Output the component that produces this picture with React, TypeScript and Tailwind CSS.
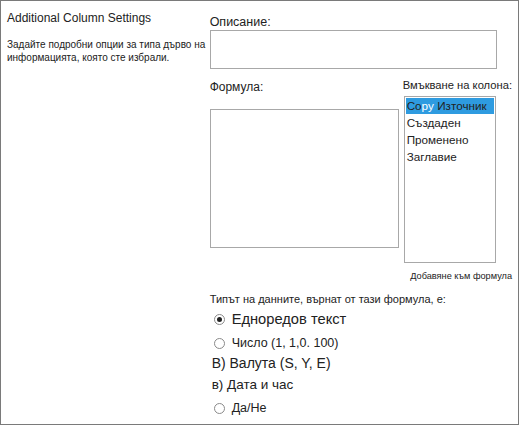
import React from "react";

const font = { fontFamily: '"Liberation Sans", Arial, sans-serif' };

function Radio({ checked }: { checked?: boolean }) {
    return (
        <span className="w-[11px] h-[11px] rounded-full border border-[#8a8a8a] bg-white flex items-center justify-center shrink-0">
            {checked && <span className="w-[5px] h-[5px] rounded-full bg-[#222]" />}
        </span>
    )
}

const columns = ["Създаден", "Променено", "Заглавие"];

export default function App() {
    return (
        <div style={font} className="w-[520px] h-[426px] bg-white">
            <div className="w-[519px] h-[425px] border border-[#7a7a7a] flex text-[#222]">
                <div className="w-[209px] pl-[6px] pt-[9px]">
                    <div className="text-[12px] leading-[16px]">Additional Column Settings</div>
                    <div className="mt-[12px] text-[10px] leading-[13px]">
                        Задайте подробни опции за типа дърво на информацията, която сте избрали.
                    </div>
                </div>

                <div className="flex-1 pr-[6px] pt-[13px]">
                    <div className="text-[12.5px] leading-[16px]">Описание:</div>
                    <div className="w-[287px] h-[39px] border border-[#a8a8a8]" />

                    <div className="flex">
                        <div className="w-[193px]">
                            <div className="mt-[10px] text-[12px] leading-[16px]">Формула:</div>
                            <div className="mt-[14px] w-[189px] h-[139px] border border-[#a8a8a8]" />
                        </div>
                        <div className="flex-1 flex flex-col">
                            <div className="mt-[8px] text-[11.2px] leading-[16px] whitespace-nowrap">Вмъкване на колона:</div>
                            <div className="mt-[3px] ml-[1px] w-[92px] h-[167px] border border-[#a8a8a8] p-px">
                                <div className="bg-[#2e9be0] h-[16px] px-[1px] text-[11.7px] leading-[16px] whitespace-nowrap">
                                    Co<span className="text-white">py</span> Източник
                                </div>
                                {columns.map((c) => (
                                    <div key={c} className="h-[17px] px-[1px] text-[11.7px] leading-[17px]">{c}</div>
                                ))}
                            </div>
                            <div className="mt-[6px] text-[9.2px] leading-[14px] text-right whitespace-nowrap">Добавяне към формула</div>
                        </div>
                    </div>

                    <div className="mt-[8px] text-[11px] leading-[16px]">Типът на данните, върнат от тази формула, е:</div>
                    <div className="mt-[2px] ml-[4px] flex items-center gap-[7px] text-[14.7px] leading-[20px]">
                        <Radio checked />
                        <span>Едноредов текст</span>
                    </div>
                    <div className="mt-[6px] ml-[4px] flex items-center gap-[7px] text-[12.5px] leading-[16px]">
                        <Radio />
                        <span>Число (1, 1,0. 100)</span>
                    </div>
                    <div className="mt-[3px] ml-[2px] text-[14px] leading-[18px]">B) Валута (S, Y, E)</div>
                    <div className="mt-[5px] ml-[2px] text-[13.5px] leading-[16px]">в) Дата и час</div>
                    <div className="mt-[7px] ml-[4px] flex items-center gap-[7px] text-[12.5px] leading-[16px]">
                        <Radio />
                        <span>Да/Не</span>
                    </div>
                </div>
            </div>
        </div>
    )
}
